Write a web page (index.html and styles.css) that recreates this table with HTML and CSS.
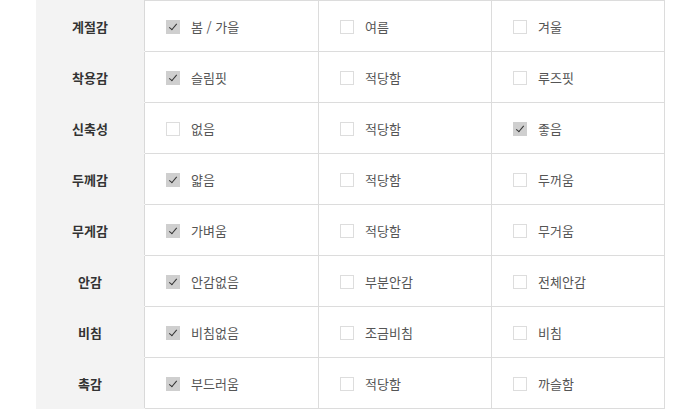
FILE: index.html
```html
<!DOCTYPE html>
<html lang="ko">
<head>
<meta charset="utf-8">
<link rel="stylesheet" href="styles.css">
</head>
<body>
<table class="spec">
  <tbody>
    <tr><th>계절감</th><td><span class="box on"></span>봄 / 가을</td><td><span class="box"></span>여름</td><td><span class="box"></span>겨울</td></tr>
    <tr><th>착용감</th><td><span class="box on"></span>슬림핏</td><td><span class="box"></span>적당함</td><td><span class="box"></span>루즈핏</td></tr>
    <tr><th>신축성</th><td><span class="box"></span>없음</td><td><span class="box"></span>적당함</td><td><span class="box on"></span>좋음</td></tr>
    <tr><th>두께감</th><td><span class="box on"></span>얇음</td><td><span class="box"></span>적당함</td><td><span class="box"></span>두꺼움</td></tr>
    <tr><th>무게감</th><td><span class="box on"></span>가벼움</td><td><span class="box"></span>적당함</td><td><span class="box"></span>무거움</td></tr>
    <tr><th>안감</th><td><span class="box on"></span>안감없음</td><td><span class="box"></span>부분안감</td><td><span class="box"></span>전체안감</td></tr>
    <tr><th>비침</th><td><span class="box on"></span>비침없음</td><td><span class="box"></span>조금비침</td><td><span class="box"></span>비침</td></tr>
    <tr><th>촉감</th><td><span class="box on"></span>부드러움</td><td><span class="box"></span>적당함</td><td><span class="box"></span>까슬함</td></tr>
  </tbody>
</table>
</body>
</html>
```
FILE: styles.css
```css
html, body {
  margin: 0;
  padding: 0;
  background: #fff;
}
body {
  font-family: "Noto Sans CJK KR", "Noto Sans", sans-serif;
  font-size: 13px;
  color: #555;
}
.spec {
  margin-left: 36px;
  border-collapse: collapse;
  table-layout: fixed;
}
.spec th {
  width: 108px;
  height: 50px;
  padding: 0;
  background: #f3f3f3;
  color: #333;
  font-weight: bold;
  text-align: center;
  border-top: 1px solid #f3f3f3;
  border-bottom: 1px solid #f3f3f3;
  border-right: 1px solid #d9d9d9;
}
.spec td {
  width: 152px;
  height: 50px;
  padding: 0 0 0 21px;
  border: 1px solid #dcdcdc;
  vertical-align: middle;
  white-space: nowrap;
}
.spec td + td {
  width: 151px;
}
.box {
  display: inline-block;
  vertical-align: -2px;
  width: 12px;
  height: 12px;
  border: 1px solid #dddddd;
  background: #fff;
  margin-right: 11px;
  position: relative;
}
.box.on {
  background: #cfcfcf;
  border-color: #cfcfcf;
}
.box.on::after {
  content: "";
  position: absolute;
  left: 4px;
  top: 1px;
  width: 3px;
  height: 7px;
  border-right: 1.6px solid #333;
  border-bottom: 1.6px solid #333;
  transform: rotate(40deg);
}
```
